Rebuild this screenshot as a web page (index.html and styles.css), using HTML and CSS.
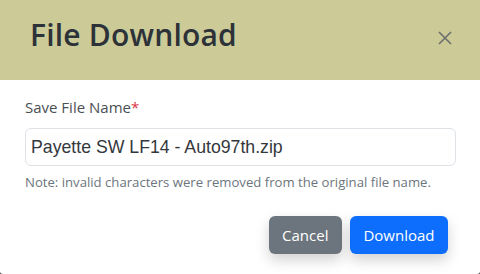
FILE: index.html
```html
<!DOCTYPE html>
<html>
<head>
<meta charset="utf-8">
<link rel="stylesheet" href="styles.css">
</head>
<body>
<div class="modal">
  <div class="modal-header">
    <h1 class="modal-title">File Download</h1>
    <button class="close" aria-label="Close">
      <svg width="14" height="14" viewBox="0 0 14 14"><path d="M1 1L13 13M13 1L1 13" stroke="#6b6e6c" stroke-width="1.6" fill="none"/></svg>
    </button>
  </div>
  <div class="modal-body">
    <label class="label">Save File Name<span class="req">*</span></label>
    <input class="input" type="text" value="Payette SW LF14 - Auto97th.zip">
    <div class="note">Note: invalid characters were removed from the original file name.</div>
    <div class="footer">
      <button class="btn btn-cancel">Cancel</button>
      <button class="btn btn-primary">Download</button>
    </div>
  </div>
</div>
</body>
</html>
```
FILE: styles.css
```css
html, body {
  margin: 0;
  padding: 0;
}
body {
  width: 480px;
  height: 274px;
  background: #555;
  font-family: "Open Sans", "Noto Sans", sans-serif;
  overflow: hidden;
}
.modal {
  height: 274px;
  background: #fff;
  border-radius: 0 0 3px 3px;
  display: flex;
  flex-direction: column;
}
.modal-header {
  height: 80px;
  background: #cccb98;
  display: flex;
  align-items: center;
  justify-content: space-between;
  padding: 0 28px 12px 30px;
  box-sizing: border-box;
}
.modal-title {
  margin: 0;
  font-size: 30px;
  font-weight: 600;
  color: #2d3238;
  letter-spacing: 0.2px;
}
.close {
  background: none;
  border: 0;
  padding: 0;
  display: flex;
  margin-top: 8px;
}
.modal-body {
  padding: 17px 24px 0 25px;
  display: flex;
  flex-direction: column;
}
.label {
  font-size: 15px;
  color: #4a4f55;
  margin-bottom: 11px;
}
.req {
  color: #dc3545;
}
.input {
  height: 38px;
  box-sizing: border-box;
  border: 1px solid #dee2e6;
  border-radius: 6px;
  padding: 0 5px;
  font-family: "Liberation Sans", Arial, sans-serif;
  font-size: 17.7px;
  color: #34383c;
  outline: none;
}
.note {
  margin-top: 7px;
  font-size: 13.15px;
  color: #6c757d;
}
.footer {
  display: flex;
  justify-content: flex-end;
  gap: 8px;
  margin-top: 25px;
  padding-right: 8px;
}
.btn {
  height: 38px;
  border: 0;
  border-radius: 6px;
  padding: 0 13.5px;
  font-family: "Open Sans", "Noto Sans", sans-serif;
  font-size: 15px;
  color: #fff;
  box-shadow: 0 6px 14px rgba(0, 0, 0, 0.18);
}
.btn-cancel {
  background: #6c757d;
}
.btn-primary {
  background: #0d6efd;
}
```
